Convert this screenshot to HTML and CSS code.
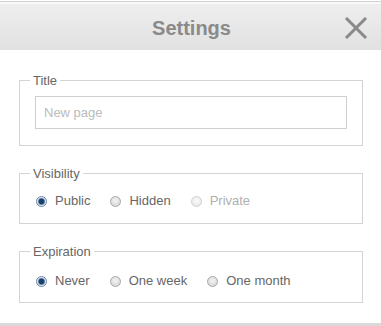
FILE: index.html
```html
<!DOCTYPE html>
<html>
<head>
<meta charset="utf-8">
<link rel="stylesheet" href="styles.css">
</head>
<body>
<div class="dialog">
  <div class="header">
    <span class="title">Settings</span>
    <svg class="close" width="24" height="22" viewBox="0 0 24 22"><path d="M2 1 L22 21 M22 1 L2 21" stroke="#8a8a8a" stroke-width="3" fill="none"/></svg>
  </div>
  <div class="content">
    <fieldset class="group first">
      <legend>Title</legend>
      <input class="text" type="text" placeholder="New page">
    </fieldset>
    <fieldset class="group">
      <legend>Visibility</legend>
      <div class="options">
        <label class="opt"><span class="radio on"></span>Public</label>
        <label class="opt"><span class="radio"></span>Hidden</label>
        <label class="opt disabled"><span class="radio"></span>Private</label>
      </div>
    </fieldset>
    <fieldset class="group last">
      <legend>Expiration</legend>
      <div class="options">
        <label class="opt"><span class="radio on"></span>Never</label>
        <label class="opt"><span class="radio"></span>One week</label>
        <label class="opt"><span class="radio"></span>One month</label>
      </div>
    </fieldset>
  </div>
  <div class="footer"></div>
</div>
</body>
</html>
```
FILE: styles.css
```css
html, body { margin: 0; padding: 0; background: #fff; overflow: hidden; }
body { font-family: "Liberation Sans", Arial, sans-serif; color: #666; font-size: 13px; }
.dialog { width: 381px; display: flex; flex-direction: column; }
.header {
  flex: none;
  margin-top: 1px;
  border-top: 1px solid #d2d2d2;
  height: 48px;
  background: linear-gradient(#efefef, #e1e1e1);
  box-shadow: inset 0 2px 0 #f9f9f9;
  display: flex; align-items: center; justify-content: center;
  position: relative;
}
.title { font-weight: bold; font-size: 20px; color: #8a8a8a; margin-left: 2px; margin-top: 4px; }
.close { position: absolute; right: 13px; top: 15px; }
.content { flex: none; padding: 23px 18px 0 19px; }
.group {
  margin: 0 0 20px 0;
  border: 1px solid #d4d4d4;
  padding: 8px 15px 14px 15px;
}
.group.first { padding-bottom: 16px; }
.group.last .options { padding-top: 6px; }
.group.last { padding-bottom: 13px; }
legend { padding: 0 3px; margin-left: -5px; line-height: 15px; color: #666; }
.text {
  display: block; box-sizing: border-box; width: 312px; height: 33px;
  border: 1px solid #cfcfcf; padding: 0 8px; font: 13px "Liberation Sans", Arial, sans-serif; color: #666;
  outline: none;
}
.text::placeholder { color: #bbb; }
.group .options { display: flex; gap: 20px; padding: 4px 0 0 1px; height: 16px; align-items: center; }
.opt { display: flex; align-items: center; gap: 8px; color: #666; line-height: 16px; }
.opt.disabled { color: #b0b0b0; }
.radio {
  width: 11px; height: 11px; border-radius: 50%; box-sizing: border-box;
  border: 1px solid #a9a9a9;
  background: radial-gradient(circle at 50% 40%, #f4f4f4, #cfcfcf);
}
.disabled .radio { border-color: #d0d0d0; background: radial-gradient(circle at 50% 40%, #fafafa, #e4e4e4); }
.radio.on {
  border: 1px solid #6d89a6;
  background: radial-gradient(circle, #1d3f66 0 2.5px, #5a7fa6 3px, #dfe8f0 4px);
}
.footer { flex: none; height: 6px; background: #dadada; }
```
